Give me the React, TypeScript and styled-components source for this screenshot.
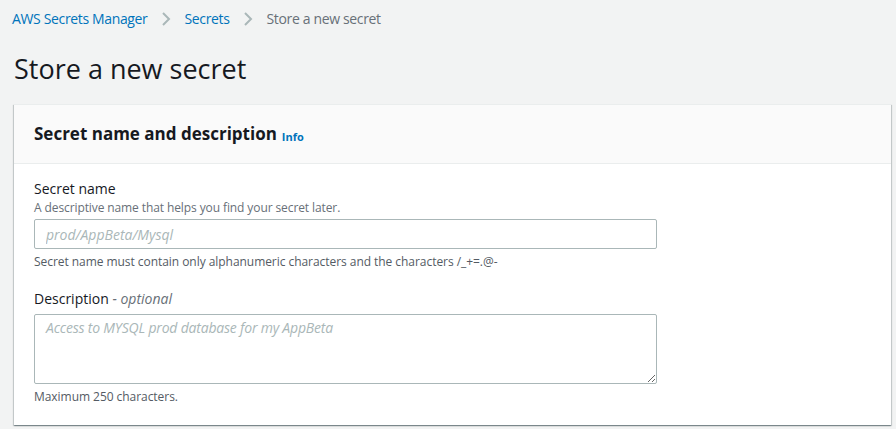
import React from "react";
import styled, { createGlobalStyle } from "styled-components";

const Global = createGlobalStyle`
  html, body { margin: 0; padding: 0; background: #f2f3f3; }
  body { font-family: "Open Sans", "Noto Sans", sans-serif; color: #16191f; }
  * { box-sizing: border-box; }
`;

const Page = styled.div`
  padding: 0 5px 0 14px;
  width: 896px;
  height: 429px;
  overflow: hidden;
`;

const Breadcrumbs = styled.nav`
  display: flex;
  align-items: center;
  height: 38px;
  margin-left: -2px;
  font-size: 14px;
  letter-spacing: -0.35px;
`;

const Crumb = styled.a<{ $current?: boolean }>`
  color: ${(p) => (p.$current ? "#687078" : "#0073bb")};
  text-decoration: none;
  line-height: 20px;
`;

const Sep = styled.span`
  display: inline-flex;
  width: 37px;
  justify-content: center;
  align-items: center;
`;

const Title = styled.h1`
  margin: 0;
  padding: 13px 0 0 0;
  font-size: 27px;
  font-weight: 400;
  line-height: 36px;
  height: 66px;
  color: #16191f;
`;

const Card = styled.section`
  background: #fff;
  border-top: 1px solid #eaeded;
  box-shadow: 0 1px 1px 0 rgba(0, 28, 36, 0.3), 1px 1px 1px 0 rgba(0, 28, 36, 0.15),
    -1px 1px 1px 0 rgba(0, 28, 36, 0.15);
`;

const CardHeader = styled.header`
  background: #fafafa;
  border-bottom: 1px solid #eaeded;
  height: 59px;
  padding: 0 20px;
  display: flex;
  align-items: center;
  gap: 5px;
`;

const Heading = styled.h2`
  margin: 0;
  font-size: 17px;
  font-weight: 700;
  line-height: 22px;
`;

const Info = styled.a`
  color: #0073bb;
  font-size: 11px;
  font-weight: 700;
  text-decoration: none;
  padding-top: 4px;
`;

const CardBody = styled.div`
  padding: 14px 20px 20px 20px;
`;

const Field = styled.div<{ $gap?: number }>`
  margin-top: ${(p) => p.$gap ?? 0}px;
  display: flex;
  flex-direction: column;
`;

const Label = styled.label`
  font-size: 14px;
  line-height: 22px;
  color: #16191f;
`;

const Optional = styled.i`
  color: #687078;
`;

const Hint = styled.div`
  font-size: 12px;
  line-height: 16px;
  color: #687078;
  letter-spacing: -0.1px;
`;

const Input = styled.input`
  margin-top: 3px;
  width: 623px;
  height: 30px;
  border: 1px solid #aab7b8;
  border-radius: 2px;
  padding: 0 11px;
  font-family: inherit;
  font-size: 14px;
  &::placeholder { color: #aab7b8; font-style: italic; }
`;

const TextArea = styled.textarea`
  margin-top: 4px;
  width: 623px;
  height: 70px;
  border: 1px solid #aab7b8;
  border-radius: 2px;
  padding: 2px 11px;
  font-family: inherit;
  font-size: 14px;
  line-height: 22px;
  letter-spacing: -0.2px;
  &::placeholder { color: #aab7b8; font-style: italic; }
`;

const FootNote = styled.div`
  margin-top: 5px;
  font-size: 12px;
  line-height: 16px;
  color: #545b64;
  letter-spacing: -0.05px;
`;

const Chevron = () => (
  <svg width="10" height="16" viewBox="0 0 10 16">
    <path d="M2 2 L8 8 L2 14" fill="none" stroke="#aab7b8" strokeWidth="2" />
  </svg>
);

export default function App() {
  return (
    <Page>
      <Global />
      <Breadcrumbs>
        <Crumb href="#">AWS Secrets Manager</Crumb>
        <Sep><Chevron /></Sep>
        <Crumb href="#">Secrets</Crumb>
        <Sep><Chevron /></Sep>
        <Crumb $current>Store a new secret</Crumb>
      </Breadcrumbs>
      <Title>Store a new secret</Title>
      <Card>
        <CardHeader>
          <Heading>Secret name and description</Heading>
          <Info href="#">Info</Info>
        </CardHeader>
        <CardBody>
          <Field>
            <Label>Secret name</Label>
            <Hint>A descriptive name that helps you find your secret later.</Hint>
            <Input placeholder="prod/AppBeta/Mysql" />
            <FootNote>Secret name must contain only alphanumeric characters and the characters /_+=.@-</FootNote>
          </Field>
          <Field $gap={18}>
            <Label>
              Description <Optional>- optional</Optional>
            </Label>
            <TextArea placeholder="Access to MYSQL prod database for my AppBeta" />
            <FootNote>Maximum 250 characters.</FootNote>
          </Field>
        </CardBody>
      </Card>
    </Page>
  );
}
